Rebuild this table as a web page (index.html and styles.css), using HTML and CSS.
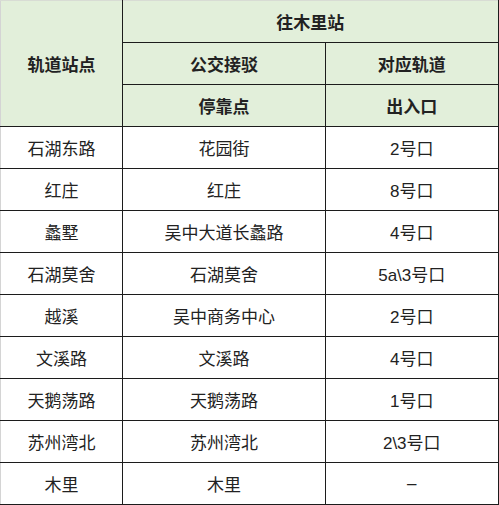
FILE: index.html
```html
<!DOCTYPE html>
<html lang="zh">
<head>
<meta charset="utf-8">
<link rel="stylesheet" href="styles.css">
</head>
<body>
<table class="grid">
  <colgroup>
    <col class="c1"><col class="c2"><col class="c3">
  </colgroup>
  <thead>
    <tr>
      <th rowspan="3" class="first top">轨道站点</th>
      <th colspan="2" class="top last">往木里站</th>
    </tr>
    <tr>
      <th>公交接驳</th>
      <th class="last">对应轨道</th>
    </tr>
    <tr>
      <th>停靠点</th>
      <th class="last">出入口</th>
    </tr>
  </thead>
  <tbody>
    <tr><td class="first">石湖东路</td><td>花园街</td><td class="last">2号口</td></tr>
    <tr><td class="first">红庄</td><td>红庄</td><td class="last">8号口</td></tr>
    <tr><td class="first">蠡墅</td><td>吴中大道长蠡路</td><td class="last">4号口</td></tr>
    <tr><td class="first">石湖莫舍</td><td>石湖莫舍</td><td class="last">5a\3号口</td></tr>
    <tr><td class="first">越溪</td><td>吴中商务中心</td><td class="last">2号口</td></tr>
    <tr><td class="first">文溪路</td><td>文溪路</td><td class="last">4号口</td></tr>
    <tr><td class="first">天鹅荡路</td><td>天鹅荡路</td><td class="last">1号口</td></tr>
    <tr><td class="first">苏州湾北</td><td>苏州湾北</td><td class="last">2\3号口</td></tr>
    <tr><td class="first">木里</td><td>木里</td><td class="last">–</td></tr>
  </tbody>
</table>
</body>
</html>
```

FILE: styles.css
```css
html, body {
  margin: 0;
  padding: 0;
  background: #ffffff;
}

.grid {
  border-collapse: collapse;
  table-layout: fixed;
  width: 498px;
  font-family: "Liberation Sans", "Noto Sans CJK SC", sans-serif;
  font-size: 17px;
  color: #222222;
}

.c1 { width: 122px; }
.c2 { width: 203px; }
.c3 { width: 173px; }

.grid th,
.grid td {
  height: 41px;
  padding: 0;
  text-align: center;
  vertical-align: middle;
  border: 1px solid #1c1c1c;
  white-space: nowrap;
}

.grid th {
  background: #e2efda;
  font-weight: bold;
}

.grid td {
  background: #ffffff;
  font-weight: normal;
}

.grid .first {
  border-left: 1px solid #d4d4d4;
}

.grid .top {
  border-top: 1px solid #d8dcd4;
}

.grid .last {
  border-right: 2px solid #1c1c1c;
}

.grid tbody tr:last-child td {
  border-bottom: 2px solid #1c1c1c;
}
```
